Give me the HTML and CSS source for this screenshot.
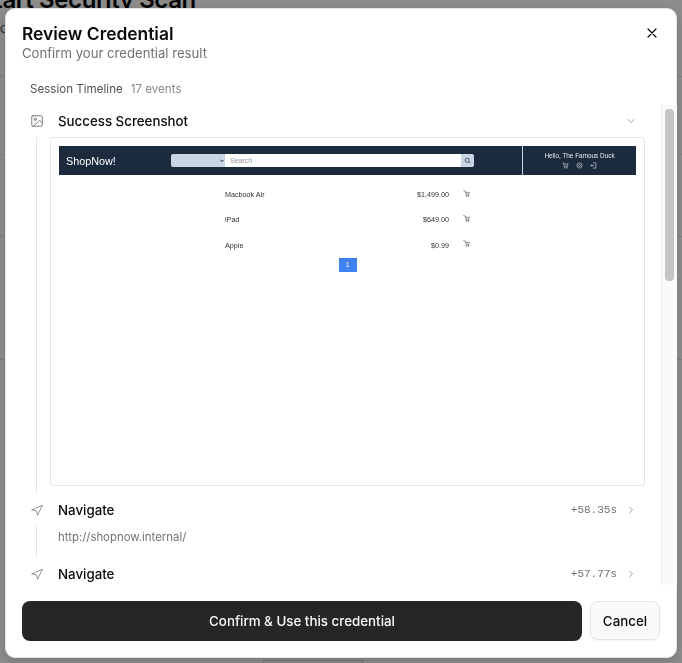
FILE: index.html
```html
<!DOCTYPE html>
<html lang="en">
<head>
<meta charset="utf-8">
<title>Review Credential</title>
<link rel="stylesheet" href="styles.css">
</head>
<body>
<div class="behind">
  <div class="behind-title">Start Security Scan</div>
  <div class="behind-sub">Fo</div>
  <div class="behind-row r1"></div>
  <div class="behind-row r2"></div>
  <div class="behind-row r3"></div>
  <div class="behind-row r4"></div>
  <div class="behind-box"></div>
</div>
<div class="scrim"></div>
<section class="dialog">
  <header class="head">
    <div>
      <h2 class="title">Review Credential</h2>
      <p class="sub">Confirm your credential result</p>
    </div>
    <svg class="close" viewBox="0 0 24 24" width="16" height="16"><path d="M18 6 6 18M6 6l12 12"/></svg>
  </header>
  <div class="tl-head"><span class="tl-name">Session Timeline</span><span class="tl-count">17 events</span></div>
  <div class="scroll-wrap">
    <div class="timeline">
      <div class="ev-row">
        <svg class="ev-icon" viewBox="0 0 24 24" width="14" height="14"><rect x="3" y="3" width="18" height="18" rx="2"/><circle cx="9" cy="9" r="2"/><path d="m21 15-3.1-3.1a2 2 0 0 0-2.8 0L6 21"/></svg>
        <span class="ev-name">Success Screenshot</span>
        <svg class="chev" viewBox="0 0 24 24" width="12" height="12"><path d="m6 9 6 6 6-6"/></svg>
      </div>
      <div class="ev-body">
        <div class="shot">
          <div class="shop">
            <div class="shop-main">
              <span class="brand">ShopNow!</span>
              <div class="search">
                <span class="cat"><svg viewBox="0 0 10 10" width="6" height="6"><path d="m2 3 3 3 3-3"/></svg></span>
                <span class="field">Search</span>
                <span class="go"><svg viewBox="0 0 24 24" width="7" height="7"><circle cx="11" cy="11" r="7"/><path d="m21 21-5-5"/></svg></span>
              </div>
            </div>
            <div class="shop-user">
              <span class="hello">Hello, The Famous Duck</span>
              <div class="user-icons">
                <svg viewBox="0 0 24 24" width="7" height="7"><path d="M2 3h3l3 12h10l3-8H6"/><circle cx="9" cy="20" r="1.5"/><circle cx="17" cy="20" r="1.5"/></svg>
                <svg viewBox="0 0 24 24" width="7" height="7"><circle cx="12" cy="12" r="9"/><circle cx="12" cy="12" r="3"/></svg>
                <svg viewBox="0 0 24 24" width="7" height="7"><path d="M10 3h10v18H10M14 12H3m4-4-4 4 4 4"/></svg>
              </div>
            </div>
          </div>
          <div class="products">
            <div class="prod"><span class="p-name">Macbook Air</span><span class="p-price">$1,499.00</span><svg class="p-cart" viewBox="0 0 24 24" width="7" height="7"><path d="M1 1l7 3 3 11h9l2-7H9"/><circle cx="12" cy="20" r="2"/><circle cx="19" cy="20" r="2"/></svg></div>
            <div class="prod"><span class="p-name">iPad</span><span class="p-price">$649.00</span><svg class="p-cart" viewBox="0 0 24 24" width="7" height="7"><path d="M1 1l7 3 3 11h9l2-7H9"/><circle cx="12" cy="20" r="2"/><circle cx="19" cy="20" r="2"/></svg></div>
            <div class="prod"><span class="p-name">Apple</span><span class="p-price">$0.99</span><svg class="p-cart" viewBox="0 0 24 24" width="7" height="7"><path d="M1 1l7 3 3 11h9l2-7H9"/><circle cx="12" cy="20" r="2"/><circle cx="19" cy="20" r="2"/></svg></div>
          </div>
          <div class="pager"><span class="page">1</span></div>
        </div>
      </div>
      <div class="ev-row">
        <svg class="ev-icon plane" viewBox="0 0 24 24" width="13" height="13"><path d="M3 11 22 2l-9 19-2-8-8-2Z"/></svg>
        <span class="ev-name">Navigate</span>
        <span class="ev-time">+58.35s</span>
        <svg class="chev" viewBox="0 0 24 24" width="12" height="12"><path d="m9 6 6 6-6 6"/></svg>
      </div>
      <div class="ev-body ev-url">http://shopnow.internal/</div>
      <div class="ev-row">
        <svg class="ev-icon plane" viewBox="0 0 24 24" width="13" height="13"><path d="M3 11 22 2l-9 19-2-8-8-2Z"/></svg>
        <span class="ev-name">Navigate</span>
        <span class="ev-time">+57.77s</span>
        <svg class="chev" viewBox="0 0 24 24" width="12" height="12"><path d="m9 6 6 6-6 6"/></svg>
      </div>
    </div>
    <div class="bar"><div class="thumb"></div></div>
  </div>
  <footer class="foot">
    <button class="btn-main">Confirm &amp; Use this credential</button>
    <button class="btn-cancel">Cancel</button>
  </footer>
</section>
</body>
</html>
```
FILE: styles.css
```css
* { box-sizing: border-box; }
html, body { margin: 0; height: 100%; overflow: hidden; }
body { background: #fff; font-family: Inter, sans-serif; color: #0a0a0a; }
.behind { overflow: hidden; height: 663px; }
.behind-title { font-size: 24px; font-weight: 600; line-height: 28px; letter-spacing: -0.4px; margin: -14px 0 0 -21px; color: #0a0a0a; white-space: nowrap; }
.behind-sub { font-size: 14px; line-height: 20px; margin: 4px 0 0 -8px; color: #555; }
.behind-row { border-bottom: 1px solid #e5e5e5; }
.r1 { height: 39px; }
.r2 { height: 78px; }
.r3 { height: 82px; }
.r4 { height: 123px; }
.behind-box { height: 10px; width: 100px; margin: 300px 0 0 263px; border: 1px solid #d8d8d8; }
.scrim { position: fixed; inset: 0; background: rgba(0,0,0,.45); }
.dialog {
  position: fixed; left: 5px; top: 8px; width: 672px; height: 650px;
  background: #fff; border-radius: 10px; border: 1px solid #e5e5e5;
  box-shadow: 0 4px 12px rgba(0,0,0,.15);
  display: flex; flex-direction: column;
}
.head { display: flex; justify-content: space-between; align-items: flex-start; padding: 15px 16px 0 16px; flex: none; }
.title { margin: 0; font-size: 17.4px; line-height: 20px; font-weight: 600; }
.sub { margin: -1px 0 0; font-size: 13.15px; line-height: 20px; color: #737373; }
.close { fill: none; stroke: #0a0a0a; stroke-width: 1.8; stroke-linecap: round; stroke-linejoin: round; margin-top: 1px; }
.tl-head { display: flex; gap: 8px; align-items: center; padding: 10px 0 0 24px; height: 42px; flex: none; font-size: 11.6px; line-height: 16px; }
.tl-name { color: #525252; }
.tl-count { color: #8a8a8a; }
.scroll-wrap { flex: 1; min-height: 0; display: flex; }
.timeline { flex: 1; min-width: 0; padding: 0 16px 0 24px; overflow: hidden; }
.ev-row { display: flex; align-items: center; height: 32px; }
.ev-icon { flex: none; width: 14px; fill: none; stroke: #737373; stroke-width: 1.6; stroke-linecap: round; stroke-linejoin: round; margin-right: 14px; }
.plane { stroke-width: 1.4; }
.ev-name { font-size: 13.3px; line-height: 20px; font-weight: 500; flex: 1; }
.ev-time { font-family: "Liberation Mono", monospace; font-size: 11px; color: #737373; margin-right: 8px; }
.chev { flex: none; fill: none; stroke: #a3a3a3; stroke-width: 2; stroke-linecap: round; stroke-linejoin: round; margin-right: 8px; }
.ev-body { margin-left: 6px; border-left: 1px solid #e5e5e5; padding: 0 0 8px 13px; }
.ev-url { font-size: 11.4px; line-height: 16px; color: #737373; padding: 3px 0 12px 21px; height: 32px; }
.shot { height: 349px; width: 595px; border: 1px solid #e5e5e5; border-radius: 3px; padding: 8px; }
.shop { height: 29px; background: #1c2a3e; display: flex; color: #fff; width: 577px; }
.shop-main { width: 463px; display: flex; align-items: center; padding-left: 7px; }
.brand { font-family: "Liberation Sans", sans-serif; font-size: 10.8px; width: 105px; flex: none; }
.search { display: flex; height: 13px; width: 303px; }
.cat { width: 54px; background: #c9d5e4; border-radius: 2px 0 0 2px; display: flex; align-items: center; justify-content: flex-end; }
.cat svg { fill: none; stroke: #1c2a3e; stroke-width: 1.6; }
.field { flex: 1; background: #fff; color: #9a9a9a; font-family: "Liberation Sans", sans-serif; font-size: 7px; line-height: 13px; padding-left: 5px; }
.go { width: 13px; background: #c9d5e4; border-radius: 0 2px 2px 0; display: flex; align-items: center; justify-content: center; }
.go svg { fill: none; stroke: #1c2a3e; stroke-width: 2.4; }
.shop-user { flex: 1; border-left: 1px solid #c9d5e4; display: flex; flex-direction: column; align-items: center; padding-top: 5px; }
.hello { font-family: "Liberation Sans", sans-serif; font-size: 6.4px; line-height: 9px; color: #e6eaf2; }
.user-icons { display: flex; gap: 7px; margin-top: 2px; }
.user-icons svg { fill: none; stroke: #e6eaf2; stroke-width: 2; }
.products { padding: 7px 0 0 166px; }
.prod { display: flex; align-items: center; height: 25.3px; width: 245px; font-family: "Liberation Sans", sans-serif; font-size: 7.2px; color: #333; }
.p-name { flex: 1; }
.p-cart { margin-left: 14px; margin-bottom: 3px; fill: none; stroke: #444; stroke-width: 2; }
.pager { display: flex; justify-content: center; }
.page { width: 18px; height: 14px; background: #3f82ef; color: #fff; font-family: "Liberation Sans", sans-serif; font-size: 7px; line-height: 14px; text-align: center; }
.bar { flex: none; width: 16px; border-left: 1px solid #ececec; background: #fafafa; padding: 4px 3px 0 3px; margin-right: -1px; }
.thumb { height: 172px; background: #c4c4c4; border-radius: 4px; }
.foot { flex: none; height: 72px; padding: 16px; display: flex; gap: 8px; }
.btn-main { flex: 1; height: 40px; border: 0; border-radius: 8px; background: #262626; color: #fafafa; font: 500 13.35px/20px Inter, sans-serif; }
.btn-cancel { flex: none; width: 70px; height: 39px; border: 1px solid #e5e5e5; border-radius: 8px; background: #fafafa; color: #0a0a0a; font: 500 13.35px/20px Inter, sans-serif; box-shadow: 0 1px 2px rgba(0,0,0,.05); }
```
